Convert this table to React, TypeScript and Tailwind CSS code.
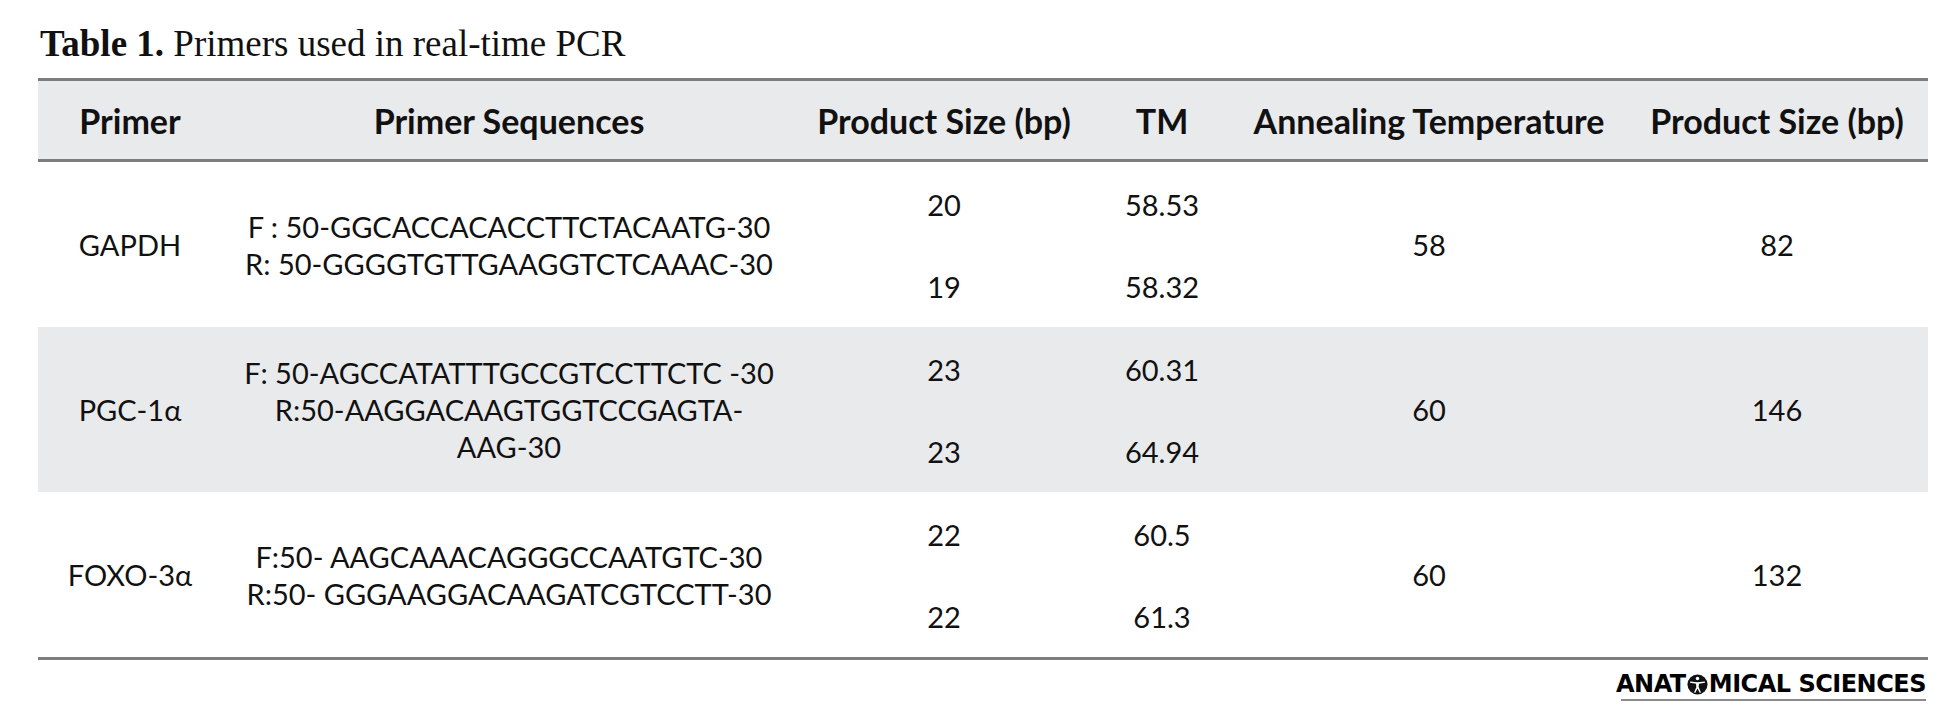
import React from "react";

// Table 1 — primers used in real-time PCR (journal table figure)
type Row = {
  name: string;
  seq: string[];
  size: [string, string];
  tm: [string, string];
  anneal: string;
  product: string;
  shaded?: boolean;
};

const ROWS: Row[] = [
  {
    name: "GAPDH",
    seq: ["F : 50-GGCACCACACCTTCTACAATG-30", "R: 50-GGGGTGTTGAAGGTCTCAAAC-30"],
    size: ["20", "19"],
    tm: ["58.53", "58.32"],
    anneal: "58",
    product: "82",
  },
  {
    name: "PGC-1α",
    seq: ["F: 50-AGCCATATTTGCCGTCCTTCTC -30", "R:50-AAGGACAAGTGGTCCGAGTA-", "AAG-30"],
    size: ["23", "23"],
    tm: ["60.31", "64.94"],
    anneal: "60",
    product: "146",
    shaded: true,
  },
  {
    name: "FOXO-3α",
    seq: ["F:50- AAGCAAACAGGGCCAATGTC-30", "R:50- GGGAAGGACAAGATCGTCCTT-30"],
    size: ["22", "22"],
    tm: ["60.5", "61.3"],
    anneal: "60",
    product: "132",
  },
];

const COLS = "grid grid-cols-[184px_574px_296px_140px_394px_302px]";

function Logo() {
  return (
    <div className="flex flex-col items-end pr-[22px] pt-[12px]">
      <div className="flex items-center font-['DejaVu_Sans',sans-serif] text-[24px] font-bold leading-[24px] tracking-[-0.5px] text-black">
        <span>ANAT</span>
        <svg viewBox="0 0 24 24" className="mx-[1px] h-[21px] w-[21px]">
          <circle cx="12" cy="12" r="11.5" fill="#111" />
          <circle cx="12" cy="5.2" r="2" fill="#fff" />
          <path d="M3.5 8.5 L12 9.5 L20.5 8.5 L20.5 10 L13.6 11 L13.4 15 L16 21 L14.5 21.5 L12 16.5 L9.5 21.5 L8 21 L10.6 15 L10.4 11 L3.5 10 Z" fill="#fff" />
        </svg>
        <span>MICAL SCIENCES</span>
      </div>
      <div className="mt-[3px] h-[2px] w-[305px] bg-[#8a8a8a]" />
    </div>
  );
}

export default function App() {
  return (
    <div className="h-[717px] w-[1948px] overflow-hidden bg-white text-[#111]">
      <div className="pl-[40px] pt-[24px] font-['Liberation_Serif',serif] text-[37px] leading-[40px]">
        <span className="font-bold">Table 1.</span> Primers used in real-time PCR
      </div>

      <div className="ml-[38px] mt-[14px] w-[1890px] font-['Lato',sans-serif] text-[29px]">
        <div className={`${COLS} h-[84px] items-center border-y-[3px] border-[#7d7d7d] bg-[#e9eaec] text-center text-[34px] font-bold`}>
          <div>Primer</div>
          <div>Primer Sequences</div>
          <div>Product Size (bp)</div>
          <div>TM</div>
          <div>Annealing Temperature</div>
          <div>Product Size (bp)</div>
        </div>

        {ROWS.map((r) => (
          <div key={r.name} className={`${COLS} h-[165px] text-center ${r.shaded ? "bg-[#e9eaec]" : ""}`}>
            <div className="flex items-center justify-center">{r.name}</div>
            <div className="flex flex-col items-center justify-center leading-[37px]">
              {r.seq.map((s) => (
                <div key={s}>{s}</div>
              ))}
            </div>
            <div className="flex flex-col pt-[2px]">
              <div className="flex flex-1 items-center justify-center">{r.size[0]}</div>
              <div className="flex flex-1 items-center justify-center">{r.size[1]}</div>
            </div>
            <div className="flex flex-col pt-[2px]">
              <div className="flex flex-1 items-center justify-center">{r.tm[0]}</div>
              <div className="flex flex-1 items-center justify-center">{r.tm[1]}</div>
            </div>
            <div className="flex items-center justify-center">{r.anneal}</div>
            <div className="flex items-center justify-center">{r.product}</div>
          </div>
        ))}
        <div className="h-[3px] bg-[#7d7d7d]" />
      </div>

      <Logo />
    </div>
  );
}
